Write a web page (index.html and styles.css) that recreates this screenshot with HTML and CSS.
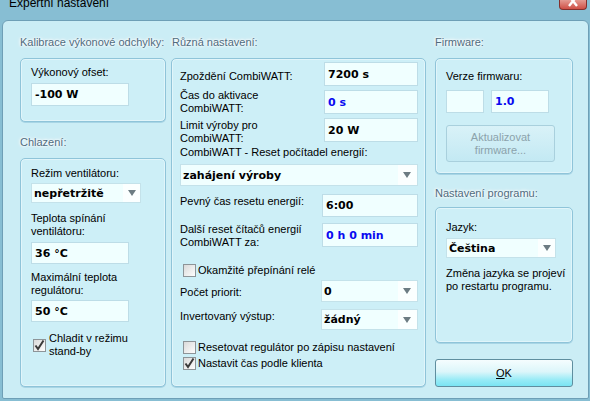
FILE: index.html
```html
<!DOCTYPE html>
<html lang="cs">
<head>
<meta charset="utf-8">
<title>Expertní nastavení</title>
<link rel="stylesheet" href="styles.css">
</head>
<body>
<div class="titlebar">
  <span class="title">Expertní nastavení</span>
  <div class="close">
    <svg width="27" height="9" viewBox="0 0 27 9"><path d="M9 -4 L17 6 M17 -4 L9 6" stroke="#fff" stroke-width="2.4" fill="none"/></svg>
  </div>
</div>
<div class="client">
  <div class="col col-left">
    <div class="gh">Kalibrace výkonové odchylky:</div>
    <div class="box box-cal">
      <div class="lab">Výkonový ofset:</div>
      <div class="field w98 h23 mt4">-100 W</div>
    </div>
    <div class="gh gh2">Chlazení:</div>
    <div class="box box-cool">
      <div class="lab">Režim ventilátoru:</div>
      <div class="combo w110 h20 mt3"><span class="ctxt">nepřetržitě</span><span class="arr"><svg width="8" height="6" viewBox="0 0 8 6"><path d="M0 0 H8 L4 6 Z" fill="#6c7c83"/></svg></span></div>
      <div class="lab mt9">Teplota spínání<br>ventilátoru:</div>
      <div class="field w98 h22 mt4">36 °C</div>
      <div class="lab mt7">Maximální teplota<br>regulátoru:</div>
      <div class="field w98 h22 mt3">50 °C</div>
      <div class="chk chk-left mt10">
        <svg class="cb" width="13" height="13" viewBox="0 0 13 13"><defs><linearGradient id="g1" x1="0" y1="0" x2="1" y2="1"><stop offset="0" stop-color="#d8d8d8"/><stop offset="1" stop-color="#ffffff"/></linearGradient></defs><rect x="0.5" y="0.5" width="12" height="12" fill="url(#g1)" stroke="#8d9498"/><path d="M2.5 6.5 L5 10 L10.5 1.5" stroke="#3a3a3a" stroke-width="2" fill="none"/></svg>
        <span>Chladit v režimu<br>stand-by</span>
      </div>
    </div>
  </div>

  <div class="col col-mid">
    <div class="gh">Různá nastavení:</div>
    <div class="box box-misc">
      <div class="row">
        <span class="lab mt8">Zpoždění CombiWATT:</span>
        <div class="field w94 h24">7200 s</div>
      </div>
      <div class="row mt3">
        <span class="lab">Čas do aktivace<br>CombiWATT:</span>
        <div class="field w94 h24 mt1 blue">0 s</div>
      </div>
      <div class="row mt3">
        <span class="lab mt1">Limit výroby pro<br>CombiWATT:</span>
        <div class="field w94 h24">20 W</div>
      </div>
      <div class="lab mt1">CombiWATT - Reset počítadel energií:</div>
      <div class="combo h22 mt5"><span class="ctxt">zahájení výroby</span><span class="arr arr-wide"><svg width="8" height="6" viewBox="0 0 8 6"><path d="M0 0 H8 L4 6 Z" fill="#6c7c83"/></svg></span></div>
      <div class="row mt8">
        <span class="lab mt1">Pevný čas resetu energií:</span>
        <div class="field w96 h23">6:00</div>
      </div>
      <div class="row mt6">
        <span class="lab">Další reset čítačů energií<br>CombiWATT za:</span>
        <div class="field w96 h24 blue">0 h 0 min</div>
      </div>
      <div class="chk chk-mid mt14">
        <svg class="cb" width="13" height="13" viewBox="0 0 13 13"><defs><linearGradient id="g2" x1="0" y1="0" x2="1" y2="1"><stop offset="0" stop-color="#d8d8d8"/><stop offset="1" stop-color="#ffffff"/></linearGradient></defs><rect x="0.5" y="0.5" width="12" height="12" fill="url(#g2)" stroke="#8d9498"/></svg>
        <span>Okamžité přepínání relé</span>
      </div>
      <div class="row mt3">
        <span class="lab mt6">Počet priorit:</span>
        <div class="combo w97 h22"><span class="ctxt">0</span><span class="arr arr-wide"><svg width="8" height="6" viewBox="0 0 8 6"><path d="M0 0 H8 L4 6 Z" fill="#6c7c83"/></svg></span></div>
      </div>
      <div class="row mt7">
        <span class="lab mt1">Invertovaný výstup:</span>
        <div class="combo w97 h21"><span class="ctxt">žádný</span><span class="arr arr-wide"><svg width="8" height="6" viewBox="0 0 8 6"><path d="M0 0 H8 L4 6 Z" fill="#6c7c83"/></svg></span></div>
      </div>
      <div class="chk chk-mid mt10">
        <svg class="cb" width="13" height="13" viewBox="0 0 13 13"><defs><linearGradient id="g3" x1="0" y1="0" x2="1" y2="1"><stop offset="0" stop-color="#d8d8d8"/><stop offset="1" stop-color="#ffffff"/></linearGradient></defs><rect x="0.5" y="0.5" width="12" height="12" fill="url(#g3)" stroke="#8d9498"/></svg>
        <span>Resetovat regulátor po zápisu nastavení</span>
      </div>
      <div class="chk chk-mid mt2">
        <svg class="cb" width="13" height="13" viewBox="0 0 13 13"><defs><linearGradient id="g4" x1="0" y1="0" x2="1" y2="1"><stop offset="0" stop-color="#d8d8d8"/><stop offset="1" stop-color="#ffffff"/></linearGradient></defs><rect x="0.5" y="0.5" width="12" height="12" fill="url(#g4)" stroke="#8d9498"/><path d="M2.5 6.5 L5 10 L10.5 1.5" stroke="#3a3a3a" stroke-width="2" fill="none"/></svg>
        <span>Nastavit čas podle klienta</span>
      </div>
    </div>
  </div>

  <div class="col col-right">
    <div class="gh">Firmware:</div>
    <div class="box box-fw">
      <div class="lab">Verze firmwaru:</div>
      <div class="fwrow mt7">
        <div class="field w38 h23"></div>
        <div class="field w58 h23 blue">1.0</div>
      </div>
      <div class="btn-dis mt12">Aktualizovat<br>firmware...</div>
    </div>
    <div class="gh gh3">Nastavení programu:</div>
    <div class="box box-prog">
      <div class="lab">Jazyk:</div>
      <div class="combo w110 h20 mt4"><span class="ctxt">Čeština</span><span class="arr"><svg width="8" height="6" viewBox="0 0 8 6"><path d="M0 0 H8 L4 6 Z" fill="#6c7c83"/></svg></span></div>
      <div class="lab mt9">Změna jazyka se projeví<br>po restartu programu.</div>
    </div>
    <div class="btn-ok"><span><span class="u">O</span>K</span></div>
  </div>
</div>
</body>
</html>
```

FILE: styles.css
```css
* { box-sizing: border-box; }
html, body { margin: 0; padding: 0; }
body {
  width: 590px;
  height: 401px;
  overflow: hidden;
  background: #87bed3;
  font-family: "Liberation Sans", Arial, sans-serif;
  font-size: 11px;
  line-height: 13px;
  color: #000;
}
.titlebar {
  height: 20px;
  display: flex;
  align-items: flex-start;
  overflow: hidden;
}
.title {
  font-size: 12px;
  line-height: 16px;
  margin-top: -5px;
  margin-left: 9px;
  white-space: nowrap;
}
.close {
  margin-left: auto;
  margin-right: 3px;
  width: 28px;
  height: 10px;
  border: 1px solid #84302c;
  border-top: none;
  border-radius: 0 0 4px 4px;
  background: linear-gradient(#e49b92, #cf4f45);
  overflow: hidden;
}
.close svg { display: block; }
.client {
  margin-left: 2px;
  width: 587px;
  height: 379px;
  border: 1px solid #6e9fb6;
  border-radius: 6px 6px 2px 2px;
  background: #cbedf5;
  padding: 13px 0 0 17px;
  display: flex;
  align-items: flex-start;
}
.col { display: flex; flex-direction: column; }
.col-left { width: 146px; margin-right: 5px; }
.col-mid { width: 255px; margin-right: 9px; }
.col-right { width: 138px; }
.gh {
  height: 16px;
  line-height: 16px;
  margin-bottom: 8px;
  color: #4f6b7e;
  white-space: nowrap;
  text-shadow: 0 0 2px #fff, 0 0 3px #fff, 0 0 4px #fff;
}
.col-mid .gh { padding-left: 1px; }
.gh2 { margin-top: 12px; }
.gh3 { margin-top: 11px; margin-bottom: 6px; }
.box {
  border: 1px solid #8fc4d9;
  border-radius: 5px;
  background: #cdeff7;
  box-shadow: inset 0 0 0 1px rgba(255,255,255,0.4), 0 1px 0 #a8d5e5;
  display: flex;
  flex-direction: column;
  align-items: flex-start;
}
.box-cal { height: 64px; padding: 7px 0 0 10px; }
.box-cool { height: 229px; padding: 8px 0 0 10px; }
.box-misc { height: 329px; padding: 3px 7px 0 8px; align-items: stretch; }
.box-fw { height: 116px; padding: 11px 0 0 10px; }
.box-prog { height: 136px; padding: 13px 0 0 10px; }
.lab { white-space: nowrap; }
.row {
  display: flex;
  justify-content: space-between;
  align-items: flex-start;
}
.field {
  display: flex;
  align-items: center;
  background: #f0ffff;
  border: 1px solid #bddde7;
  font-family: "DejaVu Sans", Verdana, sans-serif;
  font-weight: bold;
  font-size: 11px;
  padding-left: 3px;
  white-space: nowrap;
}
.combo {
  display: flex;
  align-items: stretch;
  background: #f0ffff;
  border: 1px solid #c4e2ea;
  font-family: "DejaVu Sans", Verdana, sans-serif;
  font-weight: bold;
  font-size: 11px;
  white-space: nowrap;
}
.ctxt { flex: 1; display: flex; align-items: center; padding-left: 2px; }
.arr {
  width: 17px;
  display: flex;
  align-items: center;
  justify-content: center;
  background: #fbffff;
}
.arr-wide { width: 19px; padding-right: 2px; }
.blue { color: #0a0af0; }
.fwrow { display: flex; gap: 7px; }
.chk { display: flex; align-items: center; line-height: 13px; }
.chk-left { margin-left: 2px; }
.chk-mid { margin-left: 3px; line-height: 14px; }
.cb { flex: none; margin-right: 3px; display: block; }
.chk-mid .cb { margin-right: 2px; }
.btn-dis {
  width: 109px;
  height: 37px;
  border: 1px solid #a9d0dd;
  border-radius: 3px;
  background: linear-gradient(#d9f2f8, #c3e9f3);
  color: #8ba2ab;
  display: flex;
  align-items: center;
  justify-content: center;
  text-align: center;
}
.btn-ok {
  height: 28px;
  margin-top: 16px;
  border: 1px solid #5f8e9f;
  border-radius: 3px;
  background: linear-gradient(#f5fdfe, #dcf6fa 45%, #9aebf6 75%, #7ae4f3);
  display: flex;
  align-items: center;
  justify-content: center;
}
.u { text-decoration: underline; }
.w38 { width: 38px; }
.w58 { width: 58px; }
.w94 { width: 94px; }
.w96 { width: 96px; }
.w97 { width: 97px; }
.w98 { width: 98px; }
.w110 { width: 110px; }
.h20 { height: 20px; }
.h21 { height: 21px; }
.h22 { height: 22px; }
.h23 { height: 23px; }
.h24 { height: 24px; }
.mt1 { margin-top: 1px; }
.mt2 { margin-top: 2px; }
.mt3 { margin-top: 3px; }
.mt4 { margin-top: 4px; }
.mt5 { margin-top: 5px; }
.mt6 { margin-top: 6px; }
.mt7 { margin-top: 7px; }
.mt8 { margin-top: 8px; }
.mt9 { margin-top: 9px; }
.mt10 { margin-top: 10px; }
.mt12 { margin-top: 12px; }
.mt14 { margin-top: 14px; }
```
